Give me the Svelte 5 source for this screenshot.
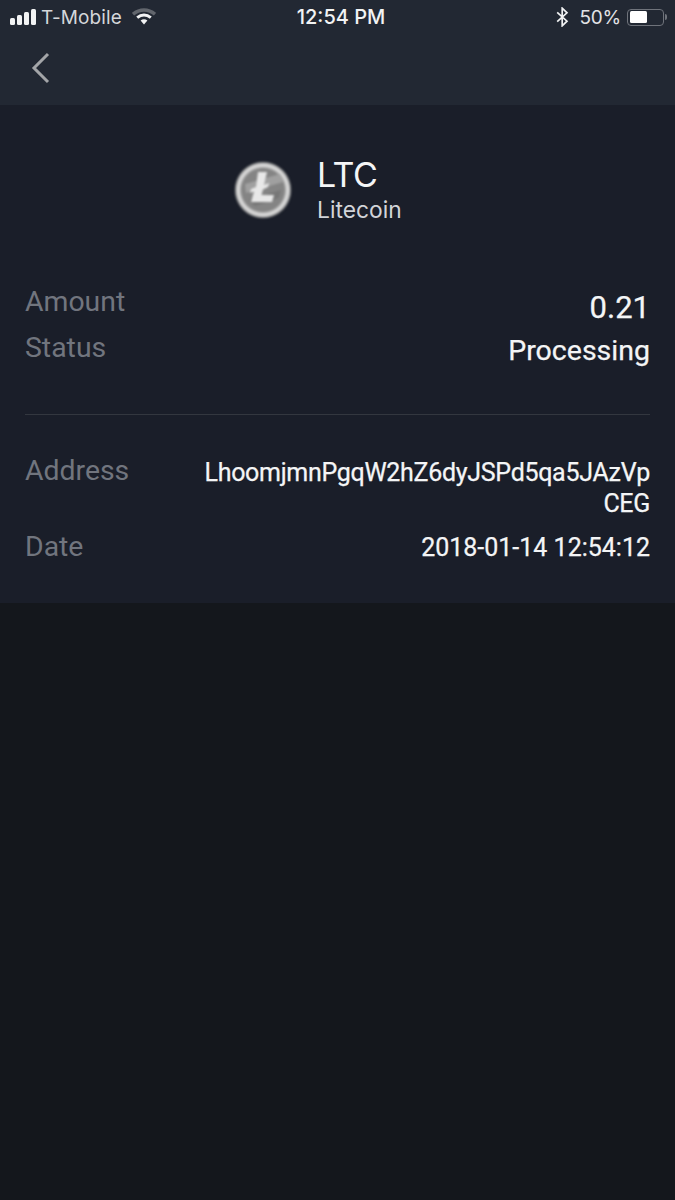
<script>
  const rows1 = [
    { label: 'Amount', value: '0.21', cls: 'amount' },
    { label: 'Status', value: 'Processing', cls: 'status' }
  ];
</script>

<div class="page">
  <header class="top">
    <div class="statusbar">
      <div class="sb-left">
        <div class="signal"><i class="b1"></i><i class="b2"></i><i class="b3"></i><i class="b4"></i></div>
        <span class="carrier">T-Mobile</span>
        <svg class="wifi" width="24" height="18" viewBox="0 0 24 18" aria-hidden="true">
          <path d="M1 6.2 C7.5 0.6 16.5 0.6 23 6.2" fill="none" stroke="#62666d" stroke-width="3.4"/>
          <path d="M5.2 9.6 C9.4 6.2 14.6 6.2 18.8 9.6" fill="none" stroke="#f2f3f4" stroke-width="3"/>
          <path d="M8.6 12.4 C10.6 11 13.4 11 15.4 12.4 L12 16.6 Z" fill="#f2f3f4"/>
        </svg>
      </div>
      <div class="sb-time">12:54 PM</div>
      <div class="sb-right">
        <svg class="bt" width="13" height="20" viewBox="0 0 13 20" aria-hidden="true">
          <path d="M1.2 5.4 L11 14.2 L6.2 18.8 L6.2 1.2 L11 5.8 L1.2 14.6" fill="none" stroke="#f2f3f4" stroke-width="1.7"/>
        </svg>
        <span class="pct">50%</span>
        <div class="battery"><div class="fill"></div></div>
        <div class="nub"></div>
      </div>
    </div>
    <div class="navbar">
      <svg width="20" height="32" viewBox="0 0 20 32" aria-hidden="true">
        <path d="M18 2 L4 16 L18 30" fill="none" stroke="#a3a5a8" stroke-width="3"/>
      </svg>
    </div>
  </header>

  <section class="panel">
    <div class="coin">
      <svg class="logo" width="60" height="60" viewBox="0 0 60 60" aria-hidden="true">
        <defs>
          <radialGradient id="rim" cx="50%" cy="50%" r="50%">
            <stop offset="0.74" stop-color="#8a8a8a"/>
            <stop offset="0.86" stop-color="#e4e4e4"/>
            <stop offset="0.94" stop-color="#b4b4b4"/>
            <stop offset="1" stop-color="#3c3f44"/>
          </radialGradient>
        </defs>
        <circle cx="30" cy="30" r="28.5" fill="url(#rim)"/>
        <circle cx="30" cy="30" r="21.5" fill="#848484"/>
        <path d="M12 24 L47 14 L50 22 L13 33 Z" fill="#a0a0a0"/>
        <path d="M16 40 L48 30 L46 38 L22 46 Z" fill="#777"/>
        <path d="M25 12 L34 12 L31 25 L36 23 L35 27 L30 29.5 L28.5 35 L41 35 L39 42 L18 42 L21 31.5 L17 33 L18 29 L23 27 Z" fill="#e8e8e8"/>
      </svg>
      <div class="coin-text">
        <div class="sym">LTC</div>
        <div class="name">Litecoin</div>
      </div>
    </div>

    <div class="group first">
      {#each rows1 as r}
        <div class="row {r.cls}">
          <span class="label">{r.label}</span>
          <span class="value">{r.value}</span>
        </div>
      {/each}
    </div>

    <div class="rule"></div>

    <div class="group second">
      <div class="row address">
        <span class="label">Address</span>
        <span class="value">LhoomjmnPgqW2hZ6dyJSPd5qa5JAzVp<br />CEG</span>
      </div>
      <div class="row date">
        <span class="label">Date</span>
        <span class="value">2018-01-14 12:54:12</span>
      </div>
    </div>
  </section>
</div>

<style>
  :global(body) {
    margin: 0;
    background: #14171c;
  }
  .page {
    width: 675px;
    height: 1200px;
    background: #14171c;
    font-family: Roboto, "Liberation Sans", sans-serif;
    overflow: hidden;
  }
  .top {
    height: 105px;
    background: #222833;
    color: #f2f3f4;
    font-family: Inter, "Liberation Sans", sans-serif;
  }
  .statusbar {
    height: 34px;
    display: grid;
    grid-template-columns: 1fr auto 1fr;
    align-items: center;
    font-size: 19px;
  }
  .sb-left {
    display: flex;
    align-items: center;
    padding-left: 10px;
  }
  .signal {
    display: flex;
    align-items: flex-end;
    gap: 2px;
    height: 16px;
  }
  .signal i {
    display: block;
    width: 5px;
    border-radius: 1.5px;
    background: #f2f3f4;
  }
  .b1 { height: 7px; }
  .b2 { height: 10px; }
  .b3 { height: 13px; }
  .b4 { height: 16px; }
  .carrier {
    margin-left: 5px;
    color: #d5d7da;
    letter-spacing: 0.1px;
  }
  .wifi {
    margin-left: 10px;
  }
  .sb-time {
    font-size: 20px;
    font-weight: 500;
    margin-left: 7px;
  }
  .sb-right {
    display: flex;
    align-items: center;
    justify-content: flex-end;
    padding-right: 8px;
  }
  .bt {
    margin-right: 10px;
  }
  .pct {
    color: #e2e3e6;
    letter-spacing: -0.2px;
  }
  .battery {
    margin-left: 6px;
    width: 32px;
    height: 12px;
    border: 1.5px solid #6f737b;
    border-radius: 4px;
    padding: 1.5px;
  }
  .fill {
    width: 17px;
    height: 12px;
    background: #fff;
    border-radius: 1.5px;
  }
  .nub {
    width: 2px;
    height: 6px;
    margin-left: 1px;
    background: #6f737b;
    border-radius: 0 2px 2px 0;
  }
  .navbar {
    height: 71px;
    padding-left: 30px;
    padding-top: 18px;
    box-sizing: border-box;
  }
  .navbar svg {
    display: block;
  }
  .panel {
    height: 498px;
    background: #1a1e29;
    padding: 0 25px;
    box-sizing: border-box;
    overflow: hidden;
  }
  .coin {
    display: flex;
    align-items: center;
    margin-top: 50px;
    padding-left: 208px;
    gap: 24px;
  }
  .logo {
    filter: blur(1.1px);
  }
  .sym {
    font-family: Inter, "Liberation Sans", sans-serif;
    font-size: 34px;
    line-height: 40px;
    color: #f4f5f6;
    letter-spacing: -0.5px;
  }
  .name {
    font-family: Inter, "Liberation Sans", sans-serif;
    font-size: 22.8px;
    line-height: 30px;
    color: #d2d4d8;
  }
  .row {
    display: flex;
    justify-content: space-between;
  }
  .label {
    color: #71757e;
    font-size: 28.4px;
    white-space: nowrap;
  }
  .value {
    color: #f4f5f6;
    text-align: right;
    -webkit-text-stroke: 0.25px #f4f5f6;
  }
  .group.first {
    margin-top: 61px;
  }
  .amount { height: 46px; line-height: 32px; }
  .amount .value { font-size: 31px; line-height: 44px; }
  .status { height: 47px; line-height: 32px; }
  .status .value { font-size: 28.5px; line-height: 38px; }
  .rule {
    height: 1px;
    margin-top: 35px;
    background: #33373f;
  }
  .group.second {
    margin-top: 40px;
  }
  .address .value {
    font-size: 25px;
    letter-spacing: -0.3px;
    line-height: 31px;
    margin-top: 2px;
  }
  .address .label { line-height: 32px; }
  .date { margin-top: 12px; line-height: 32px; }
  .date .value { font-size: 25px; line-height: 34px; }
</style>
